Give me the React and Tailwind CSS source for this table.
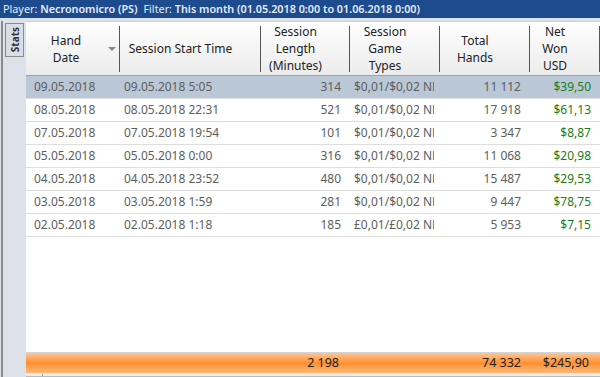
import React from 'react';

const cols = 'grid grid-cols-[94px_141px_89px_90px_90px_70px]';

const rows = [
    ['09.05.2018', '09.05.2018 5:05', '314', '$0,01/$0,02 NL', '11 112', '$39,50'],
    ['08.05.2018', '08.05.2018 22:31', '521', '$0,01/$0,02 NL', '17 918', '$61,13'],
    ['07.05.2018', '07.05.2018 19:54', '101', '$0,01/$0,02 NL', '3 347', '$8,87'],
    ['05.05.2018', '05.05.2018 0:00', '316', '$0,01/$0,02 NL', '11 068', '$20,98'],
    ['04.05.2018', '04.05.2018 23:52', '480', '$0,01/$0,02 NL', '15 487', '$29,53'],
    ['03.05.2018', '03.05.2018 1:59', '281', '$0,01/$0,02 NL', '9 447', '$78,75'],
    ['02.05.2018', '02.05.2018 1:18', '185', '£0,01/£0,02 NL', '5 953', '$7,15'],
];

function HeaderCell({ lines }) {
    return (
        <div className="relative flex items-center justify-center text-center h-full pr-[20px]">
            <div className="leading-[17px]">
                {lines.map((l, i) => (
                    <div key={i}>{l}</div>
                ))}
            </div>
            <div className="absolute right-0 top-[4px] bottom-[3px] w-px bg-[#555]" />
        </div>
    );
}

export default function App() {
    return (
        <div className="w-[600px] h-[377px] flex flex-col overflow-hidden bg-white font-['Noto_Sans','Open_Sans',sans-serif]">
            {/* Title */}
            <div className="h-[18px] shrink-0 bg-[#1d4b8e] text-[#e6ecf5] text-[10.8px] leading-[18px] pl-[3px] whitespace-nowrap">
                Player: <span className="font-semibold">Necronomicro (PS)</span>
                <span className="ml-[6px]">Filter: </span>
                <span className="font-semibold">This month (01.05.2018 0:00 to 01.06.2018 0:00)</span>
            </div>

            <div className="flex-1 flex min-h-0 bg-[#dde1ea] pt-[3px]">
                {/* Left panel */}
                <div className="w-[25px] shrink-0 border-l-2 border-l-[#8a8a8a] ml-px pt-[2px]">
                    <div className="ml-[2px] w-[19px] h-[34px] border border-[#8a8a8a] bg-[#d9dde6] flex items-center justify-center">
                        <span className="[writing-mode:vertical-rl] rotate-180 text-[10px] font-bold text-[#333] leading-none">Stats</span>
                    </div>
                </div>

                {/* Table */}
                <div className="flex-1 flex flex-col bg-white border-t border-[#c9ccd2] border-r border-r-[#666]">
                    <div className={`${cols} h-[54px] shrink-0 bg-gradient-to-b from-white to-[#ebebeb] border-b border-[#a0a0a0] text-[12px] text-[#222]`}>
                        <div className="relative flex items-center h-full">
                            <div className="w-[72px] text-center leading-[17px] ml-[4px]">
                                <div>Hand</div>
                                <div>Date</div>
                            </div>
                            <div className="ml-[6px] w-0 h-0 border-l-[4px] border-r-[4px] border-t-[4px] border-l-transparent border-r-transparent border-t-[#888]" />
                            <div className="absolute right-0 top-[4px] bottom-[3px] w-px bg-[#555]" />
                        </div>
                        <HeaderCell lines={['Session Start Time']} />
                        <HeaderCell lines={['Session', 'Length', '(Minutes)']} />
                        <HeaderCell lines={['Session', 'Game', 'Types']} />
                        <HeaderCell lines={['Total', 'Hands']} />
                        <HeaderCell lines={['Net', 'Won', 'USD']} />
                    </div>

                    {rows.map((r, i) => (
                        <div
                            key={i}
                            className={`${cols} h-[23px] shrink-0 items-center text-[12px] text-[#5e5e5e] border-b border-[#dedede] ${i === 0 ? 'bg-[#b9c7d6]' : ''}`}
                        >
                            <div className="pl-[8px]">{r[0]}</div>
                            <div className="pl-[4px]">{r[1]}</div>
                            <div className="text-right pr-[9px]">{r[2]}</div>
                            <div className="ml-[4px] mr-[6px] overflow-hidden whitespace-nowrap">{r[3]}</div>
                            <div className="text-right pr-[9px]">{r[4]}</div>
                            <div className="text-right pr-[9px] text-[#16801a]">{r[5]}</div>
                        </div>
                    ))}

                    <div className="flex-1" />

                    <div className={`${cols} h-[21px] shrink-0 items-center border-t border-[#d0d4dc] bg-gradient-to-b from-[#fdc68e] via-[#ff8f2e] to-[#fdb874] text-[12.5px] text-[#222]`}>
                        <div />
                        <div />
                        <div className="text-right pr-[11px]">2 198</div>
                        <div />
                        <div className="text-right pr-[9px]">74 332</div>
                        <div className="text-right pr-[11px]">$245,90</div>
                    </div>

                    <div className="h-[4px] shrink-0 bg-[#ececec] border-b border-[#bbb] relative">
                        <div className="absolute left-[16px] top-[1px] bottom-0 w-px bg-[#999]" />
                    </div>
                </div>
            </div>
        </div>
    );
}
